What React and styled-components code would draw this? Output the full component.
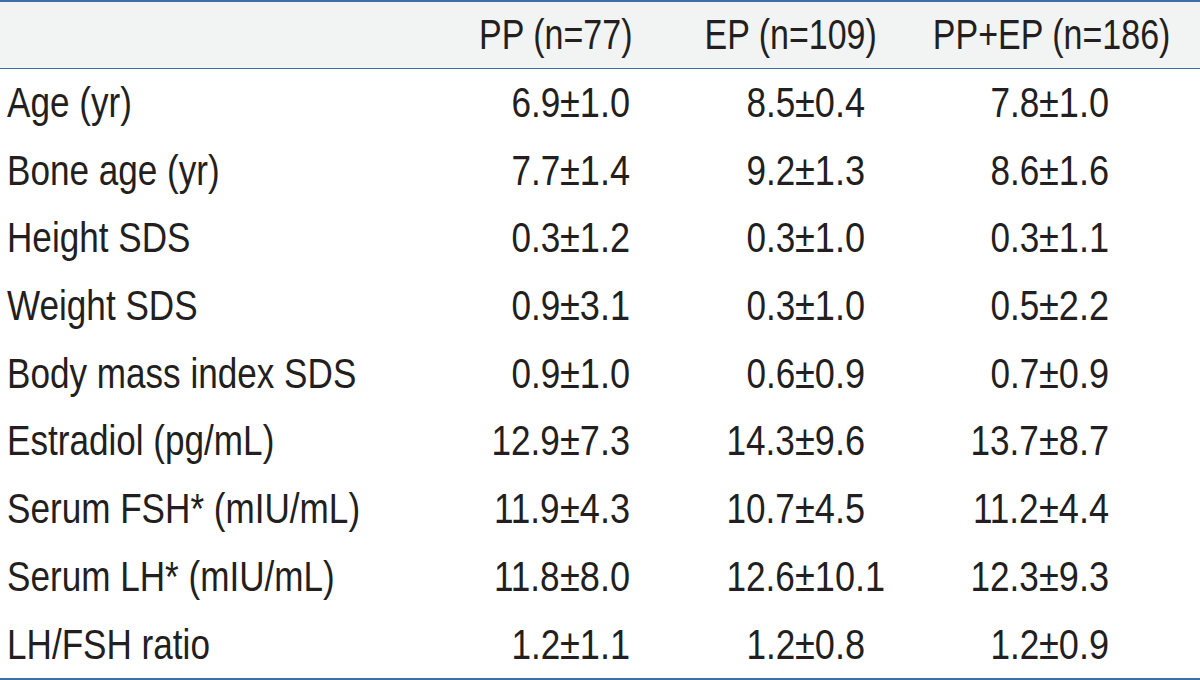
import React from "react";
import styled, { createGlobalStyle } from "styled-components";

const GlobalStyle = createGlobalStyle`
  html, body {
    margin: 0;
    padding: 0;
    background: #ffffff;
  }
  body {
    font-family: "Liberation Sans Narrow", "Liberation Sans", Arial, sans-serif;
    color: #231f20;
  }
`;

const Table = styled.div`
  width: 1200px;
  border-top: 2px solid #3d6fa6;
  border-bottom: 2px solid #3d6fa6;
`;

const Row = styled.div`
  display: grid;
  grid-template-columns: 420px 240px 240px 300px;
  height: ${(p) => (p.$head ? "66px" : "67.7px")};
  line-height: ${(p) => (p.$head ? "66px" : "67.7px")};
  font-size: 42px;
  background: ${(p) => (p.$head ? "#f2f3f3" : "transparent")};
  border-bottom: ${(p) => (p.$head ? "1px solid #3d6fa6" : "none")};
  white-space: nowrap;
`;

// the printed table uses a condensed grotesque; squeeze Liberation Sans to match
const Squeeze = styled.span`
  display: inline-block;
  flex-shrink: 0;
  transform: scaleX(${(p) => p.$scale || 0.836});
  transform-origin: ${(p) => p.$origin || "left"} center;
`;

const Label = styled.div`
  padding-left: 7px;
`;

const HeadCell = styled.div`
  display: flex;
  justify-content: flex-end;
  min-width: 0;
  padding-right: ${(p) => p.$pad}px;
`;

const ValueCell = styled.div`
  display: grid;
  grid-template-columns: ${(p) => p.$split}px auto;
`;

const Mean = styled.div`
  text-align: right;
`;

const Spread = styled.div`
  text-align: left;
`;

const heads = [
  { text: "PP (n=77)", pad: 27 },
  { text: "EP (n=109)", pad: 23 },
  { text: "PP+EP (n=186)", pad: 30 },
];

const splits = [140, 135, 139];

const rows = [
  ["Age (yr)", "6.9±1.0", "8.5±0.4", "7.8±1.0"],
  ["Bone age (yr)", "7.7±1.4", "9.2±1.3", "8.6±1.6"],
  ["Height SDS", "0.3±1.2", "0.3±1.0", "0.3±1.1"],
  ["Weight SDS", "0.9±3.1", "0.3±1.0", "0.5±2.2"],
  ["Body mass index SDS", "0.9±1.0", "0.6±0.9", "0.7±0.9"],
  ["Estradiol (pg/mL)", "12.9±7.3", "14.3±9.6", "13.7±8.7"],
  ["Serum FSH* (mIU/mL)", "11.9±4.3", "10.7±4.5", "11.2±4.4"],
  ["Serum LH* (mIU/mL)", "11.8±8.0", "12.6±10.1", "12.3±9.3"],
  ["LH/FSH ratio", "1.2±1.1", "1.2±0.8", "1.2±0.9"],
];

function Value({ value, split }) {
  const [mean, sd] = value.split("±");
  return (
    <ValueCell $split={split}>
      <Mean>
        <Squeeze $origin="right">{mean}</Squeeze>
      </Mean>
      <Spread>
        <Squeeze $scale={0.86}>±{sd}</Squeeze>
      </Spread>
    </ValueCell>
  );
}

export default function App() {
  return (
    <>
      <GlobalStyle />
      <Table>
        <Row $head>
          <Label />
          {heads.map((h) => (
            <HeadCell key={h.text} $pad={h.pad}>
              <Squeeze $origin="right" $scale={0.81}>
                {h.text}
              </Squeeze>
            </HeadCell>
          ))}
        </Row>
        {rows.map(([label, ...values]) => (
          <Row key={label}>
            <Label>
              <Squeeze>{label}</Squeeze>
            </Label>
            {values.map((v, i) => (
              <Value key={i} value={v} split={splits[i]} />
            ))}
          </Row>
        ))}
      </Table>
    </>
  );
}
